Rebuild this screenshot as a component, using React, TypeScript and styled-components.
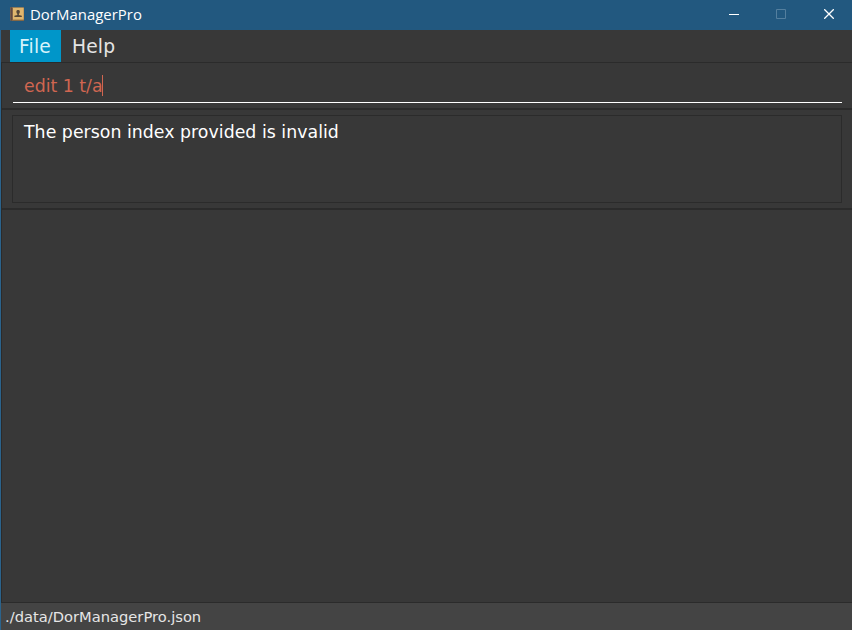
import React from "react";
import styled, { createGlobalStyle } from "styled-components";

const GlobalStyle = createGlobalStyle`
  * { box-sizing: border-box; }
  body { margin: 0; background: #383838; overflow: hidden; }
`;

const Window = styled.div`
  width: 852px;
  height: 630px;
  display: flex;
  flex-direction: column;
  background: #383838;
  border-left: 1px solid #2b638c;
  font-family: "DejaVu Sans", sans-serif;
  color: #fff;
`;

const TitleBar = styled.header`
  height: 30px;
  flex: none;
  display: flex;
  align-items: center;
  margin-left: -1px;
  padding: 0 0 2px 10px;
  background: #22587f;
`;

const Title = styled.span`
  flex: 1;
  margin-left: 6px;
  font: 14.9px/28px "Open Sans", sans-serif;
  letter-spacing: 0.04px;
`;

const WindowButton = styled.button`
  width: 47px;
  height: 28px;
  padding: 0;
  border: 0;
  background: none;
  display: flex;
  align-items: center;
  justify-content: center;
`;

const CloseButton = styled(WindowButton)`
  width: 48px;
  padding-left: 2px;
`;

const MenuBar = styled.nav`
  height: 32px;
  flex: none;
  display: flex;
  padding-left: 9px;
`;

const MenuItem = styled.span<{ $active?: boolean }>`
  padding: 1px 9.5px 0 9px;
  margin-right: 2.4px;
  line-height: 32px;
  height: 32px;
  font-size: 18.67px;
  letter-spacing: 0.2px;
  color: ${(p) => (p.$active ? "#d6f3fb" : "#e4e4e4")};
  background: ${(p) => (p.$active ? "#0096c9" : "transparent")};
`;

const Pane = styled.section<{ $height: number }>`
  height: ${(p) => p.$height}px;
  flex: none;
  border: solid #2b2b2b;
  border-width: 1px 0 1px 1px;
`;

const CommandField = styled.div`
  height: 31px;
  margin: 9px 10px 0 11px;
  padding: 0 0 3px 11px;
  display: flex;
  align-items: center;
  border-bottom: 1px solid #fff;
  font-size: 17.33px;
  color: #d06651;
  white-space: pre;
`;

const Caret = styled.i`
  width: 1px;
  height: 21px;
  margin-left: -1px;
  background: #d06651;
`;

const ResultBox = styled.div`
  height: 88px;
  margin: 5px 10px 0 10px;
  padding: 6px 11px;
  border: 1px solid #2b2b2b;
  font-size: 17.33px;
  letter-spacing: 0.03px;
  line-height: 20px;
`;

const ListPane = styled.main`
  flex: 1;
  border: solid #2b2b2b;
  border-width: 1px 0 0 1px;
`;

const StatusBar = styled.footer`
  height: 28px;
  flex: none;
  padding-left: 4px;
  border-top: 1px solid #2b2b2b;
  background: #444;
  color: #e6e6e6;
  font-size: 14.67px;
  letter-spacing: 0.02px;
  line-height: 28px;
`;

const BookIcon = () => (
  <svg width="14" height="14" viewBox="0 0 14 14">
    <rect x="0.3" y="0.3" width="13.7" height="13.4" rx="0.6" fill="#b98c50" />
    <rect x="3" y="1" width="10.4" height="11.6" fill="#e0b66e" />
    <rect x="0.4" y="0.3" width="2.2" height="13.4" rx="0.6" fill="#5f4843" />
    <path d="M2.6 13.3H14" stroke="#805c38" strokeWidth="0.8" />
    <rect x="6.5" y="3" width="3.2" height="3.8" rx="1.3" fill="#554637" />
    <path d="M7.3 6h1.6v2.1l2.9.6v1.4H4.4V8.7l2.9-.6z" fill="#554637" />
  </svg>
);

export default function App() {
  return (
    <>
      <GlobalStyle />
      <Window>
        <TitleBar>
          <BookIcon />
          <Title>DorManagerPro</Title>
          <WindowButton aria-label="Minimize">
            <svg width="10" height="10"><path d="M0 5.5h10" stroke="#fff" /></svg>
          </WindowButton>
          <WindowButton aria-label="Maximize" disabled>
            <svg width="10" height="10"><path d="M.5.5h9v9h-9z" fill="none" stroke="#547f9e" /></svg>
          </WindowButton>
          <CloseButton aria-label="Close">
            <svg width="10" height="10"><path d="M.2.2l9.6 9.6M9.8.2L.2 9.8" stroke="#fff" strokeWidth="1.3" /></svg>
          </CloseButton>
        </TitleBar>
        <MenuBar>
          <MenuItem $active>File</MenuItem>
          <MenuItem>Help</MenuItem>
        </MenuBar>
        <Pane $height={47}>
          <CommandField>edit 1 t/a<Caret /></CommandField>
        </Pane>
        <Pane $height={100}>
          <ResultBox>The person index provided is invalid</ResultBox>
        </Pane>
        <ListPane />
        <StatusBar>./data/DorManagerPro.json</StatusBar>
      </Window>
    </>
  );
}
